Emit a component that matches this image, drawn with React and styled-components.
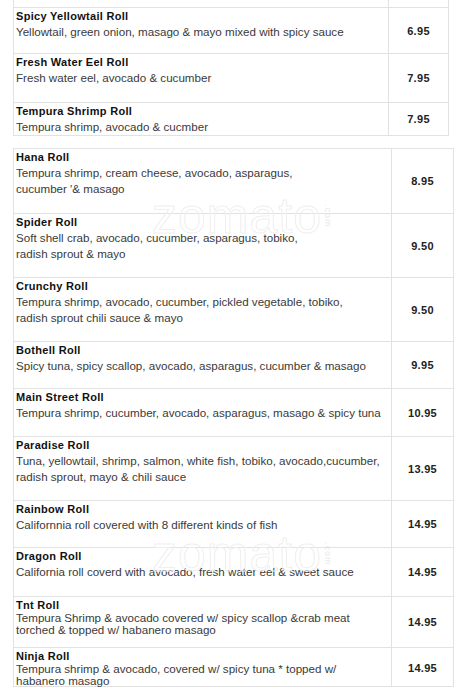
import React from "react";
import styled, { createGlobalStyle } from "styled-components";

const rollsA = [
  { name: "Spicy Yellowtail Roll", desc: ["Yellowtail, green onion, masago & mayo mixed with spicy sauce"], price: "6.95", h: 46 },
  { name: "Fresh Water Eel Roll", desc: ["Fresh water eel, avocado & cucumber"], price: "7.95", h: 49 },
  { name: "Tempura Shrimp Roll", desc: ["Tempura shrimp, avocado & cucmber"], price: "7.95", h: 33 },
];

const rollsB = [
  { name: "Hana Roll", desc: ["Tempura shrimp, cream cheese, avocado, asparagus,", "cucumber '& masago"], price: "8.95", h: 64 },
  { name: "Spider Roll", desc: ["Soft shell crab, avocado, cucumber, asparagus, tobiko,", "radish sprout & mayo"], price: "9.50", h: 64 },
  { name: "Crunchy Roll", desc: ["Tempura shrimp, avocado, cucumber, pickled vegetable, tobiko,", "radish sprout chili sauce & mayo"], price: "9.50", h: 64 },
  { name: "Bothell Roll", desc: ["Spicy tuna, spicy scallop, avocado, asparagus, cucumber & masago"], price: "9.95", h: 47 },
  { name: "Main Street Roll", desc: ["Tempura shrimp, cucumber, avocado, asparagus, masago & spicy tuna"], price: "10.95", h: 48 },
  { name: "Paradise Roll", desc: ["Tuna, yellowtail, shrimp, salmon, white fish, tobiko, avocado,cucumber,", "radish sprout, mayo & chili sauce"], price: "13.95", h: 64 },
  { name: "Rainbow Roll", desc: ["Californnia roll covered with 8 different kinds of fish"], price: "14.95", h: 47 },
  { name: "Dragon Roll", desc: ["California roll coverd with avocado, fresh water eel & sweet sauce"], price: "14.95", h: 49 },
  { name: "Tnt Roll", desc: ["Tempura Shrimp & avocado covered w/ spicy scallop &crab meat", "torched & topped w/ habanero masago"], price: "14.95", h: 51, tight: true },
  { name: "Ninja Roll", desc: ["Tempura shrimp & avocado, covered w/ spicy tuna * topped w/", "habanero masago"], price: "14.95", h: 39, tight: true },
];

const Global = createGlobalStyle`
  body {
    margin: 0;
    background: #fff;
    font-family: "Liberation Sans", Arial, sans-serif;
  }
`;

const Page = styled.div`
  width: 456px;
  height: 700px;
  overflow: hidden;
  display: flex;
  flex-direction: column;
  gap: 12px;
`;

const Table = styled.div`
  position: relative;
  margin-left: 13px;
  width: ${({ w }) => w}px;
  border-left: 1px solid #e2e2e2;
  border-right: 1px solid #e2e2e2;
  border-bottom: 1px solid #e2e2e2;
  border-top: ${({ open }) => (open ? "none" : "1px solid #e2e2e2")};
  display: flex;
  flex-direction: column;
`;

const Row = styled.div`
  display: grid;
  grid-template-columns: 1fr ${({ pw }) => pw}px;
  height: ${({ h }) => h}px;
  flex-shrink: 0;
  box-sizing: border-box;
  border-top: ${({ first }) => (first ? "none" : "1px solid #e2e2e2")};
`;

const Item = styled.div`
  border-right: 1px solid #e2e2e2;
  padding: 1px 0 0 2px;
  line-height: ${({ tight }) => (tight ? "12px" : "15.5px")};
`;

const Name = styled.div`
  font-size: 11px;
  font-weight: bold;
  letter-spacing: 0.3px;
  color: #111;
  line-height: ${({ tight }) => (tight ? "14px" : "15px")};
`;

const Desc = styled.div`
  font-size: 11.6px;
  color: #3a3a3a;
  white-space: nowrap;
`;

const Price = styled.div`
  display: flex;
  align-items: center;
  justify-content: center;
  font-size: 11px;
  font-weight: bold;
  letter-spacing: 0.3px;
  color: #222;
`;

const Mark = styled.div`
  position: absolute;
  left: 138px;
  top: ${({ top }) => top}px;
  font-family: "Liberation Sans", Arial, sans-serif;
  font-size: 50px;
  letter-spacing: 1px;
  color: transparent;
  -webkit-text-stroke: 1px #efefef;
  pointer-events: none;
  display: flex;
  align-items: center;
`;

const MarkDot = styled.span`
  font-size: 9px;
  writing-mode: vertical-rl;
  -webkit-text-stroke: 0;
  color: #e8e8e8;
  margin-left: 1px;
`;

const MenuRow = ({ roll, pw, first }) => (
  <Row h={roll.h} pw={pw} first={first}>
    <Item tight={roll.tight}>
      <Name tight={roll.tight}>{roll.name}</Name>
      {roll.desc.map((line) => (
        <Desc key={line}>{line}</Desc>
      ))}
    </Item>
    <Price>{roll.price}</Price>
  </Row>
);

export default function App() {
  return (
    <Page>
      <Global />
      <Table w={434} open>
        <Row h={7} pw={59} first>
          <Item />
          <Price />
        </Row>
        {rollsA.map((r) => (
          <MenuRow key={r.name} roll={r} pw={59} />
        ))}
      </Table>
      <Table w={439}>
        <Mark top={38}>
          zomato<MarkDot>.com</MarkDot>
        </Mark>
        <Mark top={376}>
          zomato<MarkDot>.com</MarkDot>
        </Mark>
        {rollsB.map((r, i) => (
          <MenuRow key={r.name} roll={r} pw={61} first={i === 0} />
        ))}
      </Table>
    </Page>
  );
}
